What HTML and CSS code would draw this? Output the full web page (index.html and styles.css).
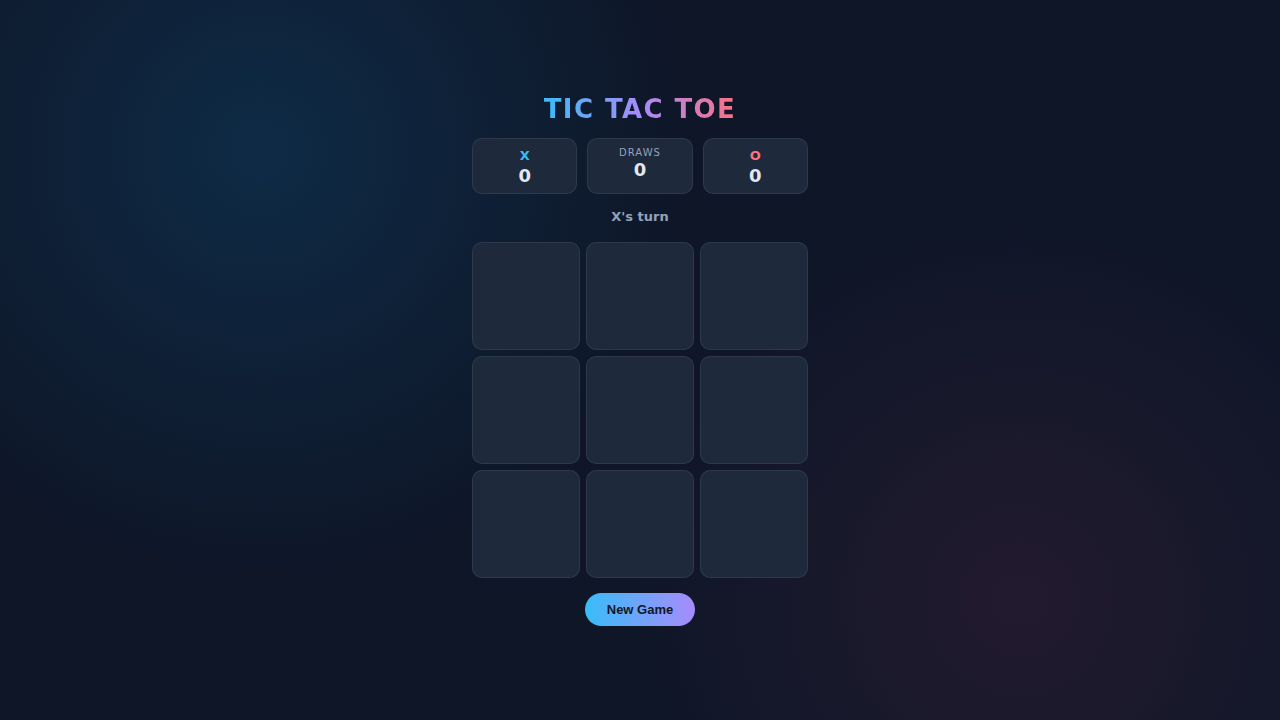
FILE: index.html
```html
<!DOCTYPE html>
<html lang="en">
<head>
<meta charset="utf-8">
<title>Tic Tac Toe</title>
<link rel="stylesheet" href="styles.css">
</head>
<body>
<main class="app">
  <h1 class="title">TIC TAC TOE</h1>
  <div class="scores">
    <div class="score">
      <div class="label label-x">X</div>
      <div class="value">0</div>
    </div>
    <div class="score">
      <div class="label label-d">DRAWS</div>
      <div class="value value-d">0</div>
    </div>
    <div class="score">
      <div class="label label-o">O</div>
      <div class="value">0</div>
    </div>
  </div>
  <div class="status">X's turn</div>
  <div class="board">
    <button class="cell"></button>
    <button class="cell"></button>
    <button class="cell"></button>
    <button class="cell"></button>
    <button class="cell"></button>
    <button class="cell"></button>
    <button class="cell"></button>
    <button class="cell"></button>
    <button class="cell"></button>
  </div>
  <button class="new-game">New Game</button>
</main>
</body>
</html>
```
FILE: styles.css
```css
* { box-sizing: border-box; }
html, body { height: 100%; }
body {
  margin: 0;
  font-family: "DejaVu Sans", sans-serif;
  background:
    radial-gradient(circle at 260px 150px, rgba(14, 62, 96, 0.52) 0, rgba(14, 62, 96, 0) 430px),
    radial-gradient(circle at 1020px 600px, rgba(55, 30, 52, 0.5) 0, rgba(55, 30, 52, 0) 400px),
    #0e1628;
  display: flex;
  align-items: center;
  justify-content: center;
  color: #e2e8f0;
}
.app {
  width: 336px;
  display: flex;
  flex-direction: column;
  align-items: center;
}
.title {
  margin: 0;
  font-size: 26px;
  font-weight: 700;
  letter-spacing: 1.4px;
  line-height: 30px;
  background: linear-gradient(90deg, #38bdf8, #a78bfa 50%, #fb7185);
  -webkit-background-clip: text;
  background-clip: text;
  color: transparent;
}
.scores {
  margin-top: 14px;
  width: 100%;
  display: grid;
  grid-template-columns: repeat(3, 1fr);
  gap: 10px;
}
.score {
  height: 56px;
  padding-top: 2px;
  background: #1e293b;
  border: 1px solid rgba(148, 163, 184, 0.14);
  border-radius: 10px;
  display: flex;
  flex-direction: column;
  align-items: center;
  justify-content: center;
}
.label {
  font-weight: 700;
  font-size: 13px;
  line-height: 16px;
}
.label-x { color: #38bdf8; }
.label-o { color: #fb7185; }
.label-d {
  font-size: 10px;
  font-weight: 400;
  letter-spacing: 1px;
  color: #94a3b8;
  line-height: 12px;
  margin-top: -6px;
}
.value {
  font-weight: 700;
  font-size: 18px;
  line-height: 22px;
  margin-top: 1px;
  color: #e2e8f0;
}
.value-d { margin-top: 0; }
.status {
  margin-top: 15px;
  font-size: 13px;
  font-weight: 700;
  color: #94a3b8;
  line-height: 16px;
}
.board {
  margin-top: 17px;
  width: 100%;
  display: grid;
  grid-template-columns: repeat(3, 1fr);
  gap: 6px;
}
.cell {
  height: 108px;
  background: #1e293b;
  border: 1px solid rgba(148, 163, 184, 0.14);
  border-radius: 10px;
  padding: 0;
}
.new-game {
  margin-top: 15px;
  width: 110px;
  height: 33px;
  border: none;
  border-radius: 999px;
  background: linear-gradient(90deg, #38bdf8, #a78bfa);
  color: #0f172a;
  font-family: "Liberation Sans", Arial, sans-serif;
  font-weight: 700;
  font-size: 13px;
}
```
